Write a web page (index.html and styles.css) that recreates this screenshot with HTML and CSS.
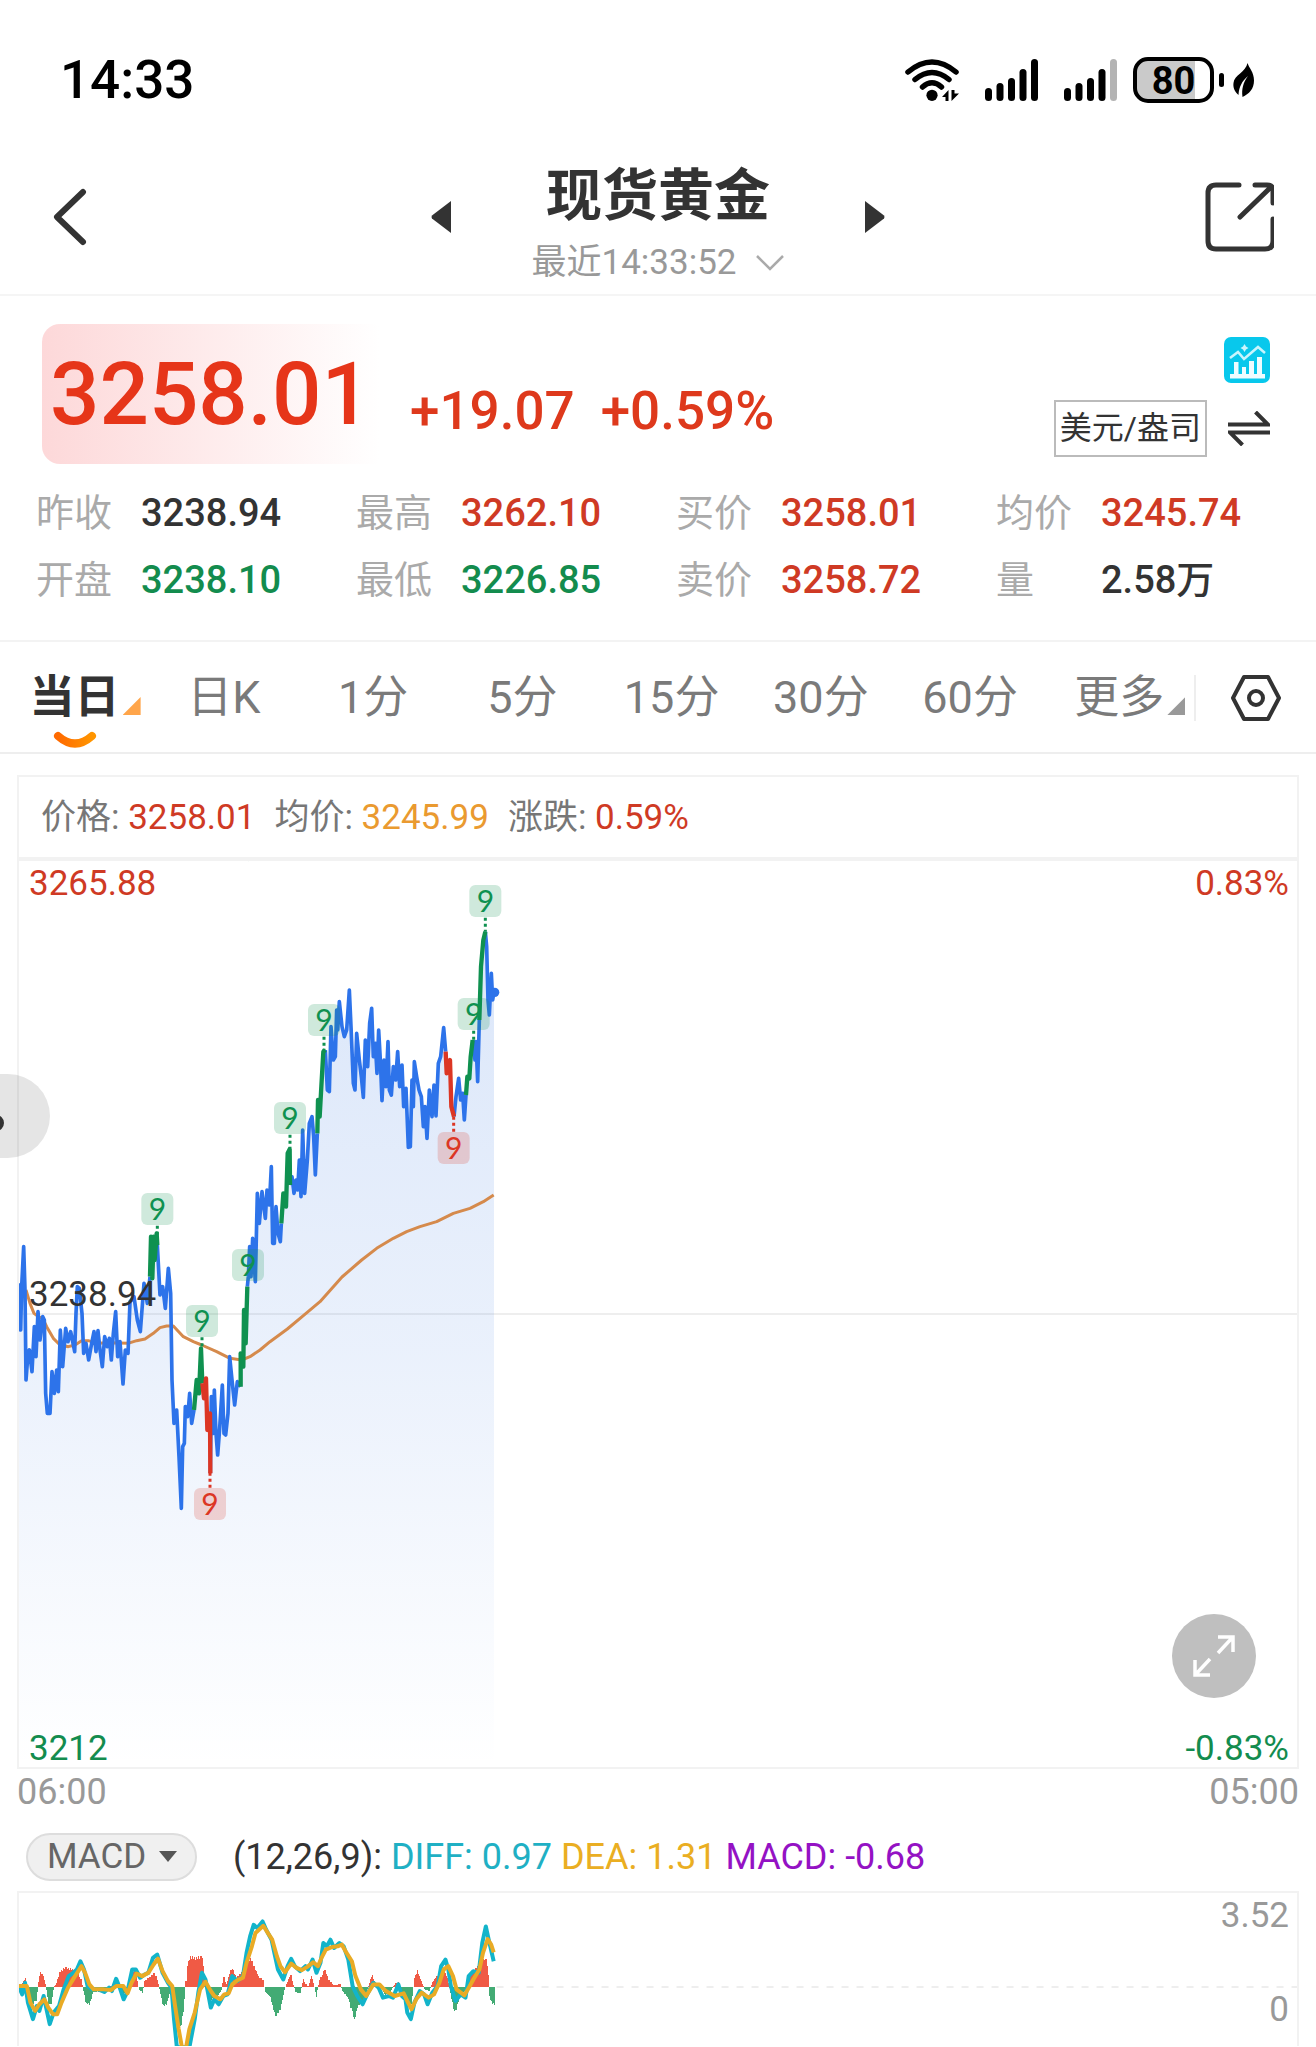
FILE: index.html
```html
<!DOCTYPE html>
<html lang="zh-CN">
<head>
<meta charset="utf-8">
<meta name="viewport" content="width=device-width, initial-scale=1">
<title>现货黄金</title>
<link rel="stylesheet" href="styles.css">
</head>
<body>
<div class="status">
  <time class="status-time">14:33</time>
  <div class="status-icons">
    <svg class="wifi" width="54" height="42" viewBox="0 0 54 42" aria-hidden="true">
      <g fill="none" stroke="#000" stroke-width="5.500" stroke-linecap="round">
        <path d="M3 13Q27-7 51 13"/><path d="M10 20.500Q27 6.500 44 20.500"/><path d="M17.500 28Q27 19.500 36.500 28"/>
      </g>
      <circle cx="27" cy="36.300" r="5.600"/>
      <path d="M43.500 31v11h-3v-4h-3.500zM46.500 42V31h3v3.500h4.500z"/>
    </svg>
    <svg class="signal" width="53" height="42" viewBox="0 0 53 42" aria-hidden="true">
      <rect y="29" width="7" height="13" rx="3.500"/><rect x="11.500" y="24" width="7" height="18" rx="3.500"/><rect x="23" y="19" width="7" height="23" rx="3.500"/><rect x="34.500" y="10" width="7" height="32" rx="3.500"/><rect x="46" width="7" height="42" rx="3.500"/>
    </svg>
    <svg class="signal-weak" width="53" height="42" viewBox="0 0 53 42" aria-hidden="true">
      <rect y="29" width="7" height="13" rx="3.500"/><rect x="11.500" y="24" width="7" height="18" rx="3.500"/><rect x="23" y="19" width="7" height="23" rx="3.500"/><rect x="34.500" y="10" width="7" height="32" rx="3.500"/><rect x="46" width="7" height="42" rx="3.500" fill="#b3b3b3"/>
    </svg>
    <span class="battery">80</span>
    <span class="battery-tip"></span>
    <svg width="22" height="34" viewBox="0 0 22 34" aria-hidden="true">
      <path d="M14.500 0C16 5 21 9 21 17.500C21 26 16 31 9.500 34C8.500 26 10 20 15 13C9 18 6 24 5.500 32C1 28 0 24 .5 20C1 12 13 9 14.500 0Z"/>
    </svg>
  </div>
</div>

<header class="header">
  <button class="icon-btn back" aria-label="返回">
    <svg width="34" height="58" viewBox="0 0 34 58"><path d="M30 4L4 29l26 25" fill="none" stroke="#333" stroke-width="6" stroke-linecap="round" stroke-linejoin="round"/></svg>
  </button>
  <div class="switcher">
    <button class="icon-btn" aria-label="上一个"><svg width="20" height="32" viewBox="0 0 20 32"><path d="M20 0v32L1 17.500Q0 16 1 14.500z" fill="#333"/></svg></button>
    <div class="heading">
      <h1 class="title">现货黄金</h1>
      <button class="subtitle">最近14:33:52
        <svg width="28" height="16" viewBox="0 0 28 16"><path d="M1 1l13 13L27 1" fill="none" stroke="#aaa" stroke-width="2.500"/></svg>
      </button>
    </div>
    <button class="icon-btn" aria-label="下一个"><svg width="20" height="32" viewBox="0 0 20 32"><path d="M0 0v32L19 17.500Q20 16 19 14.500z" fill="#333"/></svg></button>
  </div>
  <button class="icon-btn share" aria-label="分享">
    <svg width="69" height="70" viewBox="0 0 69 70"><path d="M34 3H11Q3 3 3 11V59Q3 67 11 67H60Q68 67 68 59V37M50 3H62Q68 3 68 9V21M35 35L66 5" fill="none" stroke="#333" stroke-width="5" stroke-linecap="round"/></svg>
  </button>
</header>

<main>
<section class="quote">
  <div class="quote-top">
    <strong class="price">3258.01</strong>
    <div class="changes"><span>+19.07</span><span>+0.59%</span></div>
    <div class="tools">
      <button class="icon-btn" aria-label="分析">
        <svg width="46" height="46" viewBox="0 0 46 46">
          <rect width="46" height="46" rx="7" fill="#08c8ec"/>
          <path d="M6 21l8-6 6 7 14-12 7 6" fill="none" stroke="#c9f5fd" stroke-width="2.500"/>
          <path d="M20.500 7l1.500 2.500 2.500 1.500-2.500 1.500-1.500 2.500-1.500-2.500-2.500-1.500 2.500-1.500z" fill="#c9f5fd"/>
          <path d="M6 37h35v4.500H6zM10 25h4.500v12H10zM18 30h4v7h-4zM25 24h5v13h-5zM33 20h5v17h-5z" fill="#eefcff"/>
        </svg>
      </button>
      <div class="unit-row">
        <button class="unit">美元/盎司</button>
        <button class="icon-btn" aria-label="切换单位">
          <svg width="42" height="35" viewBox="0 0 42 35"><path d="M0 13.500H40L27.500 1M42 21.500H2L14.500 34" fill="none" stroke="#333" stroke-width="4"/></svg>
        </button>
      </div>
    </div>
  </div>
  <dl class="stats">
    <div><dt>昨收</dt><dd>3238.94</dd></div>
    <div><dt>最高</dt><dd class="up">3262.10</dd></div>
    <div><dt>买价</dt><dd class="up">3258.01</dd></div>
    <div><dt>均价</dt><dd class="up">3245.74</dd></div>
    <div><dt>开盘</dt><dd class="down">3238.10</dd></div>
    <div><dt>最低</dt><dd class="down">3226.85</dd></div>
    <div><dt>卖价</dt><dd class="up">3258.72</dd></div>
    <div><dt>量</dt><dd>2.58万</dd></div>
  </dl>
</section>

<nav class="tabs">
  <div class="tab-list">
    <button class="tab active"><span class="tab-label more">当日</span>
      <svg class="smile" width="44" height="18" viewBox="0 0 44 18"><defs><linearGradient id="smile"><stop offset="0" stop-color="#ff6a00"/><stop offset="1" stop-color="#ff9500"/></linearGradient></defs><path d="M5 5Q22 20 39 5" fill="none" stroke="url(#smile)" stroke-width="8" stroke-linecap="round"/></svg>
    </button>
    <button class="tab">日K</button>
    <button class="tab">1分</button>
    <button class="tab">5分</button>
    <button class="tab">15分</button>
    <button class="tab">30分</button>
    <button class="tab">60分</button>
    <button class="tab"><span class="tab-label more">更多</span></button>
  </div>
  <button class="icon-btn settings" aria-label="设置">
    <svg width="50" height="46" viewBox="0 0 50 46" fill="none" stroke="#333" stroke-width="4"><path d="M13 2h24l11 21-11 21H13L2 23z" stroke-linejoin="round"/><circle cx="25" cy="23" r="7"/></svg>
  </button>
</nav>

<section class="charts">
  <div class="legend">
    <span>价格: <b class="up">3258.01</b></span>
    <span>均价: <b class="avg">3245.99</b></span>
    <span>涨跌: <b class="up">0.59%</b></span>
  </div>
  <div class="chart">
    <svg class="price-chart" viewBox="57 3 3834 2718" role="img" aria-label="当日价格走势">
      <defs><linearGradient id="area" x1="0" y1="0" x2="0" y2="1"><stop offset="0" stop-color="#2d70e0" stop-opacity=".17"/><stop offset=".5" stop-color="#2d70e0" stop-opacity=".1"/><stop offset="1" stop-color="#2d70e0" stop-opacity="0"/></linearGradient></defs>
      <path d="M57 1362H3891" stroke="#eee" stroke-width="6"/>
      <g id="price"></g>
      <g id="marks"></g>
    </svg>
    <span class="corner top-left up">3265.88</span>
    <span class="corner top-right up">0.83%</span>
    <span class="corner middle-left">3238.94</span>
    <span class="corner bottom-left down">3212</span>
    <span class="corner bottom-right down">-0.83%</span>
    <button class="drawer" aria-label="展开侧栏"><svg width="12" height="16" viewBox="0 0 12 16"><circle cx="-4" cy="8" r="6" fill="none" stroke="#333" stroke-width="4"/></svg></button>
    <button class="expand" aria-label="全屏"><svg width="44" height="44" viewBox="0 0 44 44"><path d="M26 3h15v15M40 4L26 19M18 41H3V26M4 40l14-15" fill="none" stroke="#fff" stroke-width="3.500"/></svg></button>
  </div>
  <div class="times"><time>06:00</time><time>05:00</time></div>
  <div class="indicator">
    <div class="pill">
      <select class="pill-select" aria-label="指标"><option>MACD</option></select>
      <svg class="pill-arrow" width="18" height="11" viewBox="0 0 18 11"><path d="M0 0h18L9 11z" fill="#555"/></svg>
    </div>
    <p class="readout"><span>(12,26,9):</span><span class="diff">DIFF: 0.97</span><span class="dea">DEA: 1.31</span><span class="macd">MACD: -0.68</span></p>
  </div>
  <div class="chart macd-panel">
    <svg class="macd-chart" viewBox="53 459 3578 462" preserveAspectRatio="none" role="img" aria-label="MACD 指标">
      <path d="M1390 743H3631" stroke="#eee" stroke-width="2" stroke-dasharray="7 8" vector-effect="non-scaling-stroke"/>
      <g id="macd"></g>
    </svg>
    <span class="corner top-right muted">3.52</span>
    <span class="corner zero muted">0</span>
  </div>
</section>
</main>
<script src="chart.js"></script>
</body>
</html>
```
FILE: styles.css
```css
* { box-sizing: border-box; }
body {
  margin: 0;
  background: #fff;
  color: #333;
  font-family: Roboto, "Noto Sans CJK SC", sans-serif;
  font-size: 36px;
  line-height: 44px;
}
button, select { font: inherit; color: inherit; background: none; border: 0; padding: 0; margin: 0; }
h1, dl, dd, p { margin: 0; }
svg { display: block; }
.icon-btn { display: block; }
.up { color: #cf3a24; }
.down { color: #138c4e; }
.avg { color: #ea9a30; }
.muted { color: #999; }

.status { display: flex; justify-content: space-between; align-items: center; height: 156px; padding: 3px 61px 0 60px; }
.status-time { font-size: 53px; font-weight: 500; color: #000; }
.status-icons { display: flex; align-items: center; }
.wifi, .signal { margin-right: 26px; }
.signal-weak { margin-right: 16px; }
.battery {
  width: 81px; height: 46px; border: 4px solid #000; border-radius: 15px;
  background: linear-gradient(90deg, #cacaca 79%, #fff 79%);
  color: #000; font-size: 38px; font-weight: 700; line-height: 40px; text-align: center;
}
.battery-tip { width: 5px; height: 14px; margin: 0 9px 0 5px; border-radius: 3px; background: #000; }

.header { display: grid; grid-template-columns: 1fr auto 1fr; align-items: center; padding: 2px 42px; border-bottom: 2px solid #f5f5f5; }
.header .icon-btn { margin-bottom: 16px; }
.back { margin-left: 11px; justify-self: start; }
.share { justify-self: end; }
.switcher { display: flex; align-items: center; }
.heading { width: 414px; text-align: center; }
.title { font-size: 56px; line-height: 76px; font-weight: 700; }
.subtitle { display: inline-flex; align-items: center; gap: 20px; line-height: 58px; font-size: 35px; color: #999; }

.quote { padding: 28px 0 26px; border-bottom: 2px solid #f3f3f3; }
.quote-top { display: flex; align-items: flex-start; gap: 20px; padding: 0 46px 0 42px; }
.price {
  width: 348px; padding-left: 8px; border-radius: 18px;
  background: linear-gradient(90deg, #fdd8d9, #fff 97%);
  color: #e63519; font-size: 87px; font-weight: 500; line-height: 140px;
}
.changes { display: flex; gap: 26px; padding-top: 34px; color: #de391c; font-size: 53px; font-weight: 500; line-height: 106px; }
.tools { display: flex; flex-direction: column; align-items: flex-end; gap: 17px; margin-left: auto; padding-top: 13px; }
.unit-row { display: flex; align-items: center; gap: 21px; }
.unit { padding: 0 4px; border: 2px solid #bbb; font-size: 32px; line-height: 53px; }
.stats { display: grid; grid-template-columns: repeat(4, 1fr); padding: 16px 0 0 36px; font-size: 38px; line-height: 67px; }
.stats div { display: flex; }
.stats dt { width: 105px; color: #aaa; }
.stats dd { font-weight: 500; }

.tabs { display: flex; align-items: center; height: 112px; padding-top: 2px; border-bottom: 2px solid #eee; }
.tab-list { display: flex; flex: 1; }
.tab { position: relative; flex: 1; color: #7a7a7a; font-size: 45px; line-height: 108px; }
.active { color: #333; font-weight: 700; }
.tab-label { position: relative; }
.more::after {
  content: ""; position: absolute; left: 100%; bottom: 9px; width: 18px; height: 18px; margin-left: 3px;
  background: #999; clip-path: polygon(100% 0, 100% 100%, 0 100%);
}
.active .more::after { background: #ffa54a; }
.smile { position: absolute; left: calc(50% - 22px); bottom: 3px; }
.settings { width: 122px; padding: 0 35px; border-left: 2px solid #eee; }

.charts { padding: 21px 17px 0; }
.legend { display: flex; gap: 19px; padding: 1px 22px 0; border: 2px solid #f2f2f2; color: #777; font-size: 35px; line-height: 79px; }
.legend b { font-weight: 400; }
.chart { position: relative; border: 2px solid #f2f2f2; }
.price-chart { width: 100%; }
.nine { font: 90px Lato, Roboto, sans-serif; text-anchor: middle; }
.corner { position: absolute; font-size: 35px; }
.top-left { top: 1px; left: 10px; }
.top-right { top: 1px; right: 8px; }
.middle-left { bottom: calc(50% - 3px); left: 10px; }
.bottom-left { bottom: -4px; left: 10px; }
.bottom-right { bottom: -4px; right: 8px; }
.drawer { position: absolute; top: 213px; left: -19px; width: 50px; height: 84px; border-radius: 0 42px 42px 0; background: rgba(0, 0, 0, .1); padding-top: 14px; }
.expand { position: absolute; right: 41px; bottom: 69px; display: grid; place-items: center; width: 84px; height: 84px; border-radius: 50%; background: #bfbfbf; }
.times { display: flex; justify-content: space-between; padding-top: 1px; color: #999; }
.indicator { display: flex; align-items: center; gap: 36px; height: 77px; padding: 8px 0 0 9px; }
.pill { position: relative; }
.pill-select { display: block; appearance: none; width: 171px; height: 48px; padding-left: 19px; border: 2px solid #ddd; border-radius: 24px; background: #f0f0f0; color: #666; font-size: 35px; line-height: 44px; }
.pill-arrow { position: absolute; top: 18px; right: 20px; pointer-events: none; }
.readout { display: flex; gap: 9px; white-space: nowrap; }
.diff { color: #1fb0c4; }
.dea { color: #eaae22; }
.macd { color: #9412c4; }
.macd-panel { border-bottom: 0; }
.macd-chart { width: 100%; height: 153px; }
.zero { bottom: 14px; right: 8px; }
```
FILE: chart.js
```js
const BLUE = '#2d73ea', GREEN = '#0f9150', RED = '#dc3624';

// Price line, split wherever its colour changes. Each run starts where the last one ended.
const runs = [
  [BLUE, '55,1270 58,1300 62,1410 65,1280 71,1160 75,1290 78,1560 84,1480 88,1470 96,1535 103,1400 108,1490 114,1355 120,1440 128,1370 133,1380 137,1600 142,1660 150,1660 156,1535 163,1600 170,1530 175,1595 181,1410 188,1520 197,1405 204,1445 212,1415 224,1475 228,1360 232,1280 238,1285 246,1360 251,1480 258,1450 266,1500 275,1450 282,1415 288,1475 294,1412 300,1470 307,1520 314,1430 322,1460 328,1435 334,1500 340,1420 347,1355 353,1490 360,1445 369,1572 376,1470 384,1480 390,1325 402,1310 412,1380 421,1415 432,1270 442,1330 450,1250'],
  [GREEN, '450,1250 453,1130 457,1255 461,1130 464,1200 470,1120 472,1155'],
  [BLUE, '472,1155 480,1305 488,1280 496,1345 505,1225 512,1300 516,1560 522,1690 530,1650 537,1790 544,1945 548,1760 553,1750 556,1640 563,1670 569,1600 575,1690 582,1650'],
  [GREEN, '582,1650 590,1560 597,1600 603,1465 607,1570'],
  [RED, '607,1570 612,1615 618,1555 622,1710 630,1660 631,1840'],
  [BLUE, '631,1840 634,1610 640,1720 643,1590 648,1720 653,1785 659,1705 667,1575 672,1720 677,1725 684,1660 689,1490 696,1560 704,1635 712,1565 722,1580'],
  [GREEN, '722,1580 722,1480 730,1520 732,1350 737,1450 742,1280'],
  [BLUE, '742,1280 745,1250 749,1160 753,1250 758,1135 766,1265 772,1000 778,1090 786,995 796,1075 801,990 808,1035 814,920 818,1150 823,1150 828,1040 834,1120 841,1145 844,1090'],
  [GREEN, '844,1090 850,1000 858,1040 863,880 869,868 870,975'],
  [BLUE, '870,975 876,950 882,1000 888,960 893,990 898,900 903,1010 908,810 914,1000 922,900 928,790 936,770 941,830 946,945 952,820'],
  [GREEN, '952,820 954,720 959,770 964,680 970,575 976,570'],
  [BLUE, '976,570 982,690 988,695 993,500 1000,600 1006,590 1010,450 1013,510 1018,425 1026,500 1033,530 1040,510 1048,390 1053,500 1060,670 1065,690 1070,520 1078,600 1084,650 1090,712 1096,540 1103,620 1109,490 1115,445 1120,590 1126,550 1131,640 1136,510 1141,600 1146,722 1152,600 1158,680 1164,545 1168,690 1174,705 1180,620 1187,660 1193,575 1199,680 1206,615 1211,740 1218,685 1225,862 1231,860 1236,660 1240,740 1243,605 1250,650 1257,690 1264,710 1270,800 1275,740 1281,835 1288,690 1296,770 1302,675 1308,768 1315,610 1322,590 1331,503 1337,575'],
  [RED, '1337,575 1340,640 1350,600 1354,740 1362,770'],
  [BLUE, '1362,770 1368,710 1376,655 1382,720 1388,700 1393,780 1398,705'],
  [GREEN, '1398,705 1402,650 1408,655 1412,590 1418,540'],
  [BLUE, '1418,540 1425,600 1428,545 1433,665 1438,480'],
  [GREEN, '1438,480 1443,320 1450,240 1456,215'],
  [BLUE, '1456,215 1460,260 1464,420 1468,465 1474,340 1478,420 1482,395']
];
const average = '78,1290 90,1330 102,1360 115,1370 128,1375 140,1400 160,1435 180,1455 205,1460 225,1455 245,1442 265,1442 290,1450 330,1448 384,1450 410,1442 435,1437 460,1420 480,1403 500,1398 520,1398 550,1430 580,1445 605,1455 650,1475 690,1495 725,1500 750,1490 780,1470 810,1445 862,1407 910,1367 960,1325 1026,1251 1085,1200 1130,1165 1180,1135 1220,1115 1260,1100 1310,1085 1360,1060 1410,1045 1450,1025 1481,1005';

const line = (points, colour, width, extra = '') =>
  `<polyline points="${points}" fill="none" stroke="${colour}" stroke-width="${width}" stroke-linejoin="round" ${extra}/>`;

const outline = runs.map(run => run[1]).join(' ');
const draw = list => list.map(([colour, points]) => line(points, colour, colour === BLUE ? 11 : 13)).join('');
document.getElementById('price').innerHTML =
  `<polygon points="57,2721 ${outline} 1482,2721" fill="url(#area)"/>` +
  line(average, '#d58a4c', 9) +
  draw(runs.filter(run => run[0] === BLUE)) +
  draw(runs.filter(run => run[0] !== BLUE)) +
  `<circle cx="1484" cy="397" r="14" fill="${BLUE}"/>`;

// Badges: centre x, centre y, dotted leader start and end, colour.
const marks = [
  [472, 1047, 1097, 1125, GREEN], [606, 1383, 1432, 1465, GREEN], [744, 1215, 0, 0, GREEN],
  [630, 1932, 1838, 1884, RED], [870, 774, 824, 865, GREEN], [972, 480, 530, 570, GREEN],
  [1456, 123, 173, 215, GREEN], [1421, 462, 512, 545, GREEN], [1361, 864, 770, 816, RED]
];
document.getElementById('marks').innerHTML = marks.map(([x, y, from, to, colour]) =>
  `<rect x="${x - 48}" y="${y - 48}" width="96" height="96" rx="18" fill="${colour}" fill-opacity=".2"/>` +
  `<path d="M${x} ${from}V${to}" stroke="${colour}" stroke-width="9" stroke-dasharray="9 9"/>` +
  `<text class="nine" x="${x}" y="${y + 32}" fill="${colour}">9</text>`).join('');

const diff = '52,740 62,765 70,730 78,790 92,840 103,800 110,815 122,770 130,810 139,855 150,820 165,800 178,750 192,710 205,700 215,690 225,665 235,690 245,740 258,750 275,750 292,758 305,745 313,755 325,718 335,745 346,780 357,755 370,690 380,690 392,715 405,705 415,700 428,655 440,645 455,700 470,730 480,745 487,840 495,925 530,925 545,840 555,760 565,700 575,720 582,760 590,805 600,780 612,795 625,770 637,765 650,710 665,725 680,710 690,640 700,590 710,555 720,565 735,545 745,570 760,600 770,650 778,690 793,720 805,680 815,658 825,680 840,695 855,680 862,690 875,660 886,700 897,670 905,610 915,620 925,600 935,625 950,610 962,620 975,660 987,740 1000,770 1015,795 1030,760 1045,730 1060,745 1072,775 1088,770 1100,775 1115,735 1125,770 1135,780 1140,820 1150,840 1160,790 1175,755 1187,765 1197,795 1210,760 1225,740 1235,680 1247,660 1255,690 1262,740 1275,785 1290,765 1303,775 1312,710 1325,695 1340,700 1350,610 1360,560 1368,600 1382,665';
const dea = '52,740 75,740 85,790 98,815 110,795 124,780 135,805 148,825 160,825 172,790 190,745 210,710 228,680 238,700 250,735 262,750 290,750 310,752 325,740 345,740 357,762 368,730 382,702 398,710 415,700 430,675 442,657 455,695 470,725 482,740 490,800 500,870 510,930 520,930 530,870 545,820 560,750 575,727 590,755 600,770 617,780 628,765 640,762 650,735 665,722 680,715 690,670 705,620 715,580 737,558 750,580 762,600 775,650 785,680 798,698 815,672 830,685 845,692 860,682 877,668 890,680 900,655 912,630 930,622 945,620 957,615 970,640 985,665 995,710 1010,750 1025,770 1045,735 1062,735 1080,755 1105,770 1130,762 1140,785 1152,810 1165,780 1180,760 1200,775 1215,765 1230,730 1242,690 1255,680 1268,710 1278,750 1300,768 1315,740 1325,720 1342,690 1352,640 1365,598 1375,615 1382,638';

// Histogram envelope: x, height above (+) or below (-) the zero line.
const ZERO = 743;
const histogram = [[52,0],[70,30],[75,-10],[88,-60],[100,-40],[104,10],[110,48],[120,35],[128,0],[135,-60],[142,-50],[148,0],[155,10],[165,45],[180,60],[200,55],[215,50],[225,25],[230,-5],[238,-50],[250,-55],[260,-15],[290,-12],[320,10],[335,-15],[345,-25],[360,0],[368,50],[380,48],[388,-5],[397,-20],[402,20],[415,30],[432,45],[440,15],[445,-10],[455,-60],[465,-55],[475,-20],[482,-30],[490,-90],[505,-130],[515,-60],[518,0],[522,70],[530,95],[545,90],[565,95],[570,20],[575,-5],[590,-40],[605,-30],[618,-10],[625,40],[632,5],[647,60],[660,30],[680,50],[690,80],[700,90],[712,60],[725,30],[735,20],[740,-15],[755,-30],[770,-90],[783,-70],[795,-10],[800,5],[812,40],[818,10],[825,-15],[840,-20],[848,25],[860,0],[870,35],[878,5],[885,-30],[893,20],[907,60],[917,25],[935,5],[950,12],[958,-15],[975,-35],[990,-105],[1000,-60],[1015,-45],[1028,0],[1040,40],[1050,10],[1065,0],[1075,-25],[1090,-20],[1105,10],[1115,15],[1125,-25],[1140,-60],[1150,-50],[1158,30],[1167,50],[1180,15],[1190,-10],[1200,-12],[1208,15],[1218,30],[1240,55],[1252,25],[1260,-20],[1272,-80],[1285,-30],[1300,-10],[1312,35],[1325,55],[1340,70],[1358,90],[1364,60],[1368,-30],[1375,-50],[1384,-55]];
let bars = '';
for (let i = 1; i < histogram.length; i++) {
  const [x0, h0] = histogram[i - 1], [x1, h1] = histogram[i];
  for (let x = Math.ceil(x0 / 3) * 3; x < x1; x += 3) {
    const h = (h0 + (h1 - h0) * (x - x0) / (x1 - x0)) * (x % 2 ? 1 : 0.92);
    bars += `<rect x="${x}" y="${h > 0 ? ZERO - h : ZERO}" width="3" height="${Math.abs(h)}" fill="${h > 0 ? '#f05a45' : '#43ab74'}" shape-rendering="crispEdges"/>`;
  }
}
const fixed = 'vector-effect="non-scaling-stroke"';
document.getElementById('macd').innerHTML = bars + line(diff, '#12b4ca', 4, fixed) + line(dea, '#e9ab25', 4, fixed);
```
